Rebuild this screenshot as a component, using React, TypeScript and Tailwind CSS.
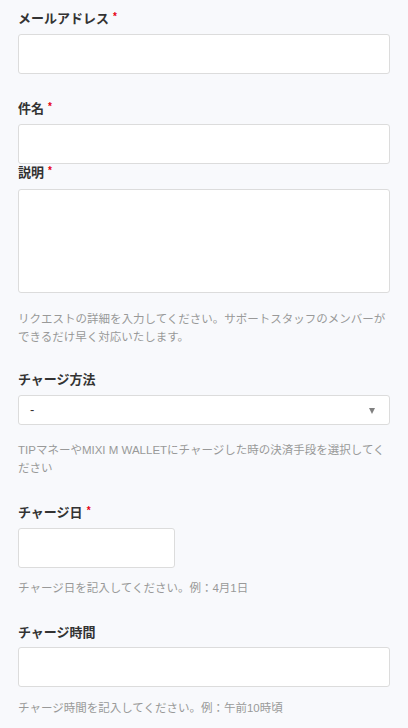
const font = { fontFamily: '"Liberation Sans", "Noto Sans CJK JP", sans-serif' };

function Label({ text, required, className = '' }: { text: string; required?: boolean; className?: string }) {
  return (
    <div className={`flex h-[18px] items-start text-[13px] font-bold leading-[18px] text-[#333] ${className}`}>
      <span>{text}</span>
      {required ? <span className="ml-[4px] text-[10px] leading-[14px] text-[#e60012]">*</span> : null}
    </div>
  );
}

function Help({ children, className = '' }: { children: React.ReactNode; className?: string }) {
  return <p className={`text-[11.5px] leading-[18px] text-[#999] ${className}`}>{children}</p>;
}

const box = 'block w-full rounded-[3px] border border-[#dcdcdc] bg-white';

export default function App() {
  return (
    <div className="min-h-[728px] w-full bg-[#f8f9fc] px-[18px] pt-[10px] pb-6" style={font}>
      <Label text="メールアドレス" required />
      <div className={`${box} mt-[6px] h-[40px]`} />

      <Label text="件名" required className="mt-[26px]" />
      <div className={`${box} mt-[6px] h-[40px]`} />

      <Label text="説明" required />
      <div className={`${box} mt-[7px] h-[104px]`} />
      <Help className="mt-[17px]">
        リクエストの詳細を入力してください。サポートスタッフのメンバーができるだけ早く対応いたします。
      </Help>

      <Label text="チャージ方法" className="mt-[25px]" />
      <div className={`${box} mt-[6px] flex h-[30px] items-center justify-between pr-[14px] pl-[11px]`}>
        <span className="text-[13px] text-[#333]">-</span>
        <svg width="6" height="6" viewBox="0 0 6 6" className="mt-[1px]">
          <polygon points="0,0 6,0 3,6" fill="#808080" />
        </svg>
      </div>
      <Help className="mt-[16px]">
        TIPマネーやMIXI M WALLETにチャージした時の決済手段を選択してください
      </Help>

      <Label text="チャージ日" required className="mt-[27px]" />
      <div className={`${box} mt-[6px] h-[40px] !w-[157px]`} />
      <Help className="mt-[11px]">チャージ日を記入してください。例：4月1日</Help>

      <Label text="チャージ時間" className="mt-[27px]" />
      <div className={`${box} mt-[5px] h-[40px]`} />
      <Help className="mt-[12px]">チャージ時間を記入してください。例：午前10時頃</Help>
    </div>
  );
}
